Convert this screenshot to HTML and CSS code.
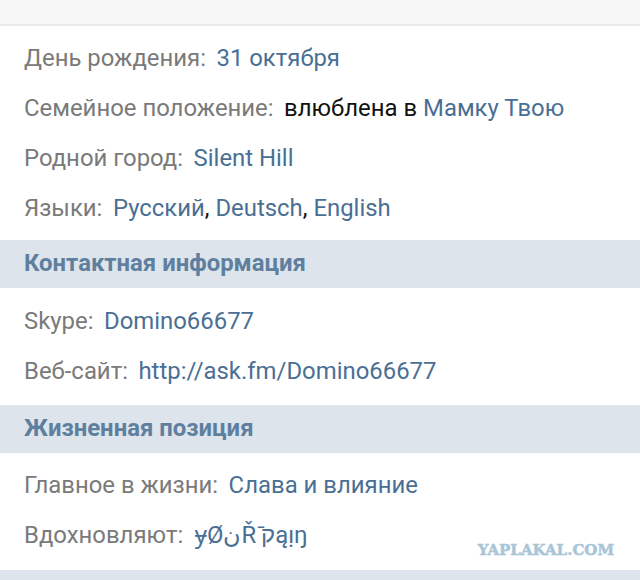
FILE: index.html
```html
<!DOCTYPE html>
<html lang="ru">
<head>
<meta charset="utf-8">
<title>Профиль</title>
<link rel="stylesheet" href="styles.css">
</head>
<body>
<div class="topbar"></div>
<section class="rows rows-first">
  <div class="row"><span class="label">День рождения:</span><a class="val">31 октября</a></div>
  <div class="row"><span class="label">Семейное положение:</span><span class="val"><span class="plain">влюблена в</span> Мамку Твою</span></div>
  <div class="row"><span class="label">Родной город:</span><a class="val">Silent Hill</a></div>
  <div class="row"><span class="label">Языки:</span><span class="val">Русский<span class="plain">,</span> Deutsch<span class="plain">,</span> English</span></div>
</section>
<h2 class="head">Контактная информация</h2>
<section class="rows rows-contact">
  <div class="row"><span class="label">Skype:</span><a class="val">Domino66677</a></div>
  <div class="row"><span class="label">Веб-сайт:</span><a class="val">http://ask.fm/Domino66677</a></div>
</section>
<h2 class="head">Жизненная позиция</h2>
<section class="rows rows-life">
  <div class="row"><span class="label">Главное в жизни:</span><a class="val">Слава и влияние</a></div>
  <div class="row"><span class="label">Вдохновляют:</span><a class="val odd">ɏØنŘ ק̄ąı̣ŋ</a></div>
</section>
<div class="bottom"></div>
<div class="mark">YAPLAKAL.COM</div>
</body>
</html>
```
FILE: styles.css
```css
html, body { margin: 0; padding: 0; }
body {
  width: 640px;
  height: 580px;
  overflow: hidden;
  position: relative;
  background: #fff;
  font-family: Roboto, "Noto Sans", sans-serif;
  font-size: 23.9px;
}
.topbar {
  height: 24px;
  background: #f6f6f6;
  border-bottom: 2px solid #e9e9e9;
}
.rows { padding: 7px 24px; }
.rows-contact { padding: 8px 24px 9px; }
.rows-life { padding: 7px 24px 10px; }
.row {
  height: 50px;
  line-height: 50px;
  display: flex;
  gap: 10.5px;
  white-space: nowrap;
}
.label { color: #7a7a7a; }
.val { color: #4a6f94; }
.plain { color: #111; }
.odd { margin-left: 1px; word-spacing: -1px; }
.head {
  margin: 0;
  height: 48px;
  line-height: 47px;
  padding: 0 24px;
  background: #dde4eb;
  color: #5f7f9f;
  font-size: 23.9px;
  font-weight: 700;
}
.bottom { height: 12px; background: #dde4eb; }
.mark {
  position: absolute;
  right: 26px;
  top: 541px;
  font-family: "DejaVu Serif", serif;
  font-weight: 700;
  font-size: 15px;
  color: #a9c5d8;
  -webkit-text-stroke: 0.5px #a9c5d8;
}
```
